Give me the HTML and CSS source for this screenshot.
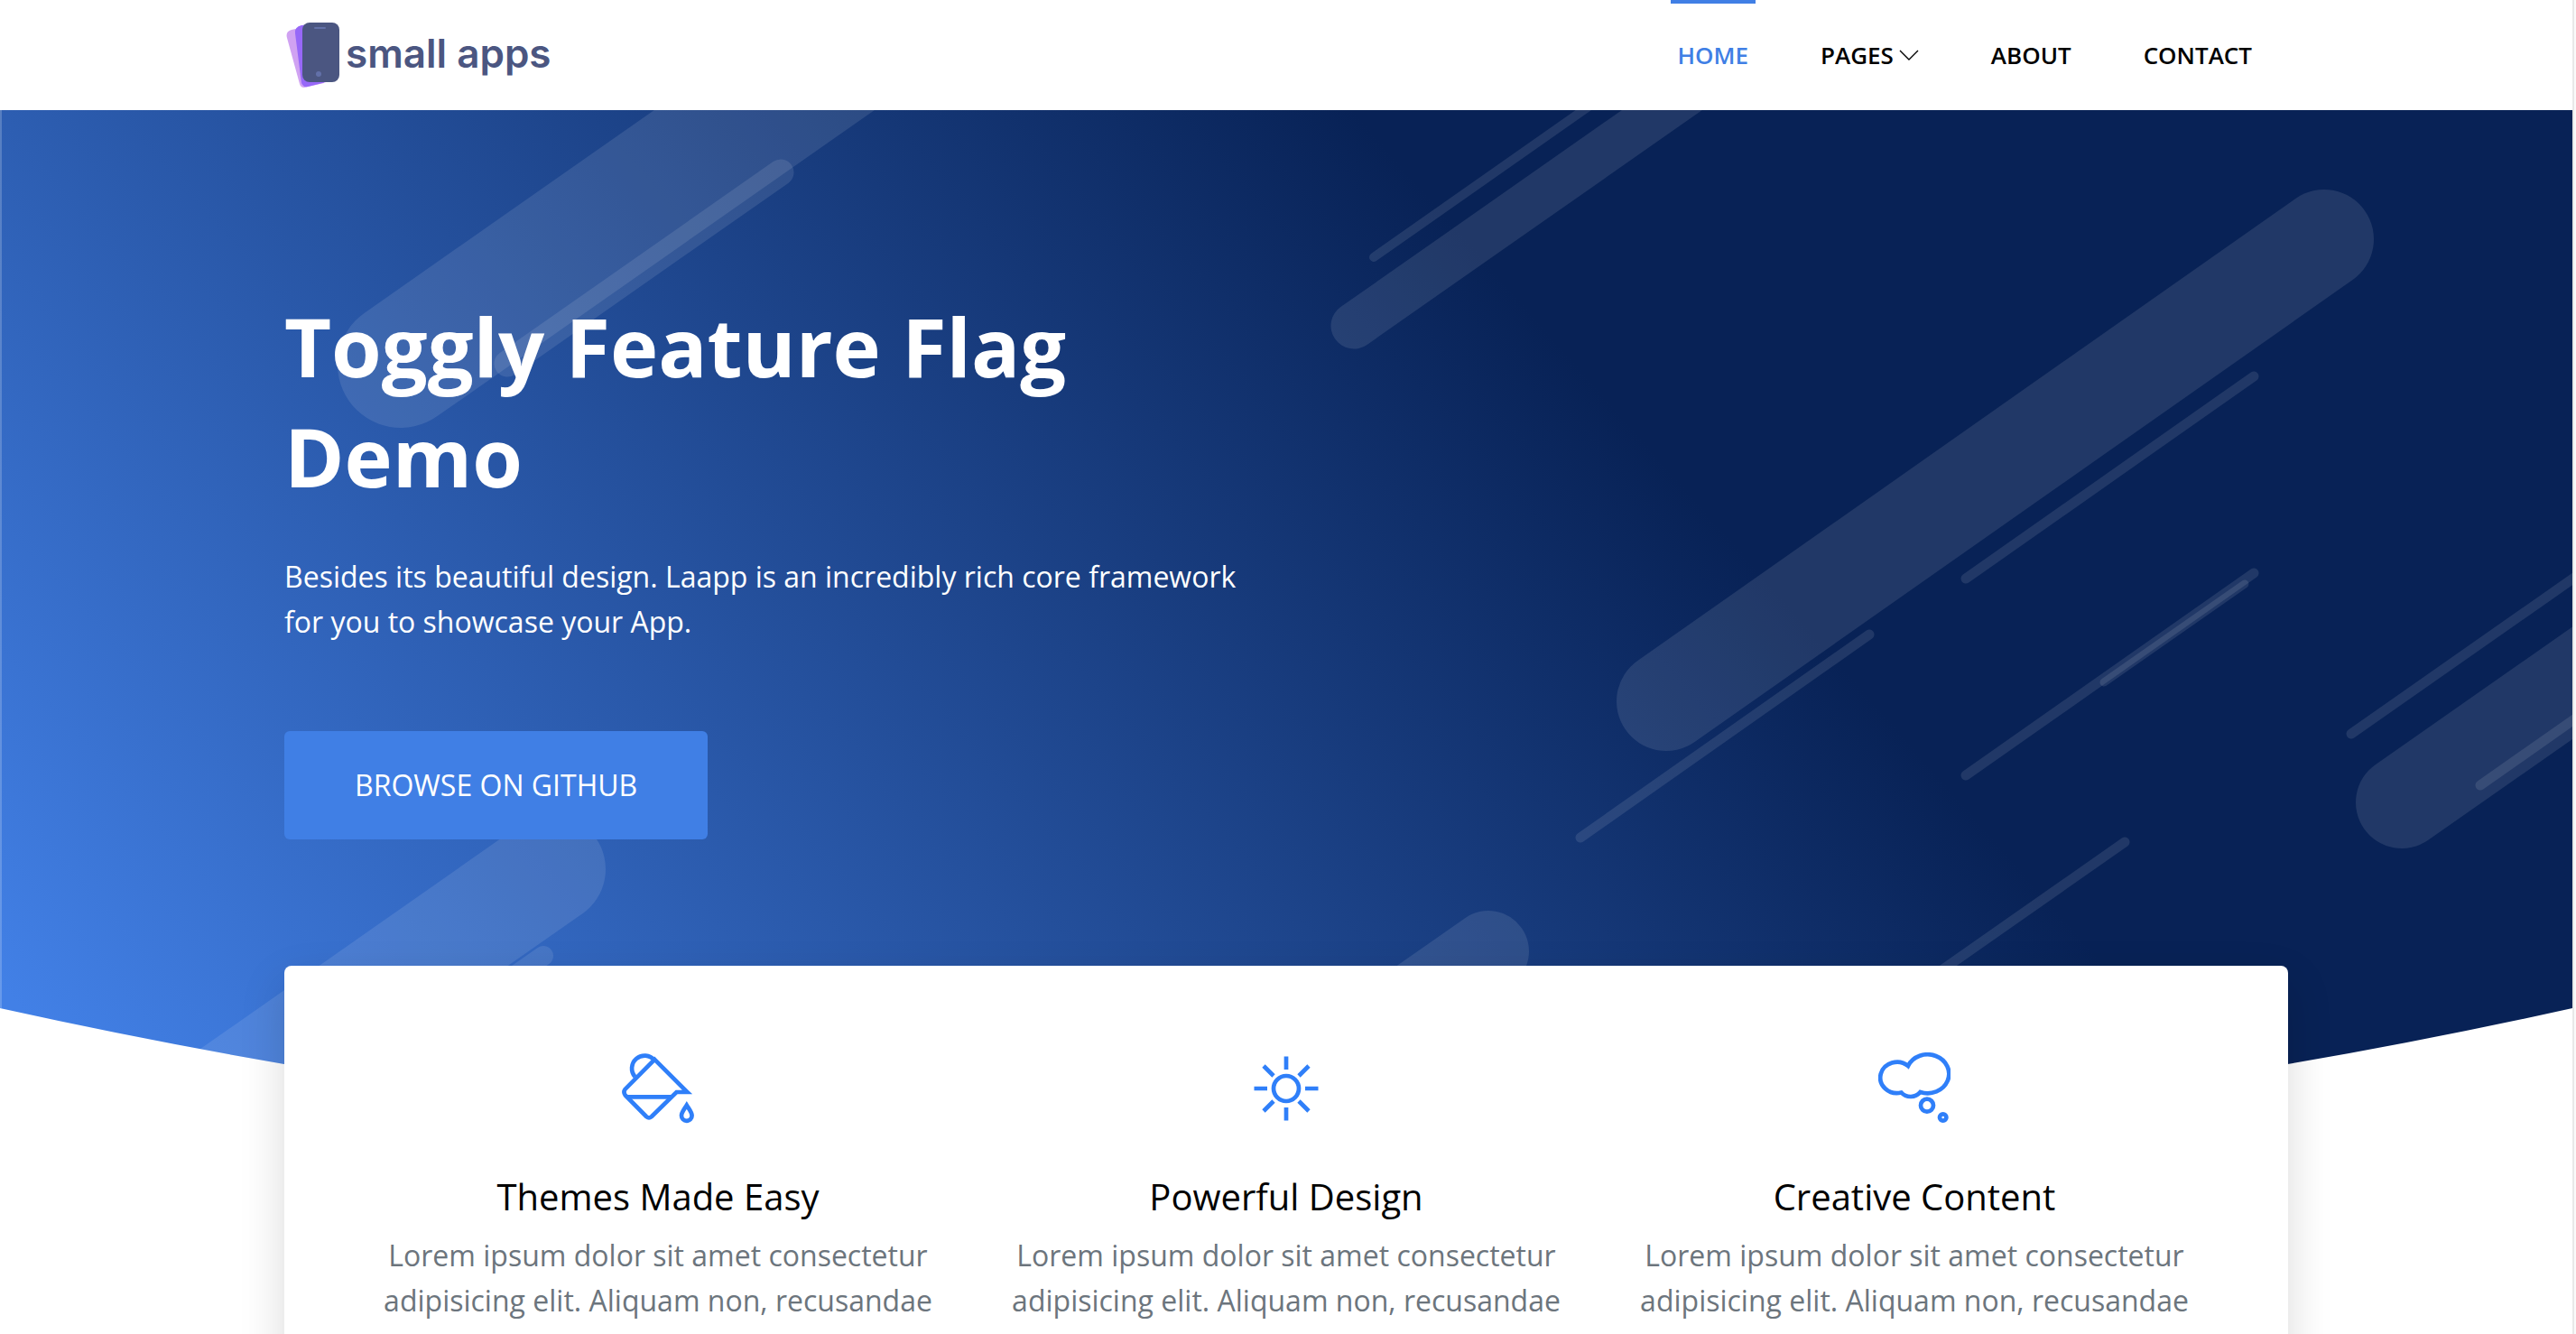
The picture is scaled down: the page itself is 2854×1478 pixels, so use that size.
FILE: index.html
```html
<!DOCTYPE html>
<html lang="en">
<head>
<meta charset="utf-8">
<meta name="viewport" content="width=device-width, initial-scale=1">
<title>Toggly Feature Flag Demo</title>
<link rel="stylesheet" href="styles.css">
</head>
<body>
<div class="page">
  <header class="header">
    <div class="container header-row">
      <a class="brand" href="#">
        <svg class="brand-mark" viewBox="0 0 60 74" aria-hidden="true">
          <path d="M1 18Q-1 11 6 9L24 5L42 68L20 73Q16 73 15 69Z" fill="#d0a2f2"/>
          <path d="M10 13Q9 6 17 4L30 3L48 66L24 72Q19 73 17 68Z" fill="#9768f8"/>
          <rect x="18" y="1" width="41" height="66" rx="8" fill="#4b5681"/>
          <rect x="31" y="6" width="13" height="2" rx="1" fill="#6270a8"/>
          <circle cx="36" cy="58" r="3" fill="#6270a8"/>
        </svg>
        <span class="brand-name">small apps</span>
      </a>
      <nav class="nav">
        <a class="nav-link active" href="#">HOME</a>
        <a class="nav-link" href="#">PAGES
          <svg class="chevron" viewBox="0 0 22 12" aria-hidden="true"><path d="M1 1l10 10L21 1"/></svg>
        </a>
        <a class="nav-link" href="#">ABOUT</a>
        <a class="nav-link" href="#">CONTACT</a>
      </nav>
    </div>
  </header>

  <main>
    <section class="hero">
      <svg class="hero-art" viewBox="0 0 2850 1154" preserveAspectRatio="none" aria-hidden="true">
        <defs>
          <linearGradient id="sky" gradientUnits="userSpaceOnUse" x1="0" y1="969" x2="1325" y2="-197">
            <stop offset="0" stop-color="#4280e6"/>
            <stop offset="1" stop-color="#082256"/>
          </linearGradient>
          <clipPath id="curve"><path d="M0 0H2850V995Q1425 1310 0 995Z"/></clipPath>
        </defs>
        <g clip-path="url(#curve)">
          <rect width="2850" height="1154" fill="url(#sky)"/>
          <g transform="translate(0 -122)" stroke="#fff" stroke-opacity="0.1" stroke-linecap="round" fill="none">
            <path stroke-width="140" d="M444 404L1044 -16"/>
            <path stroke-width="29" d="M562 403L865 191"/>
            <path stroke-width="120" d="M611 963L11 1383"/>
            <path stroke-width="22" d="M602 1059L402 1199"/>
            <path stroke-width="51" d="M1500 361L1960 39"/>
            <path stroke-width="10" d="M1522 285L1800 90"/>
            <path stroke-width="110" d="M1846 777L2575 265"/>
            <path stroke-width="11" d="M2178 641L2497 417"/>
            <path stroke-width="11" d="M2178 859L2497 635"/>
            <path stroke-width="9" d="M2331 756L2487 647"/>
            <path stroke-width="11" d="M1751 928L2071 703"/>
            <path stroke-width="11" d="M2354 933L2034 1157"/>
            <path stroke-width="11" d="M2605 813L2925 589"/>
            <path stroke-width="102" d="M2661 889L3061 609"/>
            <path stroke-width="11" d="M2748 870L3067 646"/>
            <path stroke-width="90" d="M1649 1054L1249 1334"/>
          </g>
          <rect width="2" height="1154" fill="#fff" fill-opacity="0.2"/>
        </g>
      </svg>
      <div class="container">
        <div class="hero-copy">
          <h1 class="hero-title">Toggly Feature Flag Demo</h1>
          <p class="hero-text">Besides its beautiful design. Laapp is an incredibly rich core framework for you to showcase your App.</p>
          <a class="button" href="#">BROWSE ON GITHUB</a>
        </div>
      </div>
    </section>

    <section class="features container">
      <div class="card">
        <article class="feature">
          <svg class="feature-icon" viewBox="0 0 80 80" aria-hidden="true">
            <path d="M36.3 7.8L72.5 44H60.500L32.800 71.200Q30 73.500 27.200 71.200L3.700 47.500Q1.200 44 3.700 40.700Z"/>
            <path d="M6 49.300H56"/>
            <path d="M14.500 27A14 14 0 1 1 36 8.500"/>
            <path d="M71.800 58.500C69 63 66 66.500 66 70a5.800 5.800 0 0 0 11.600 0C77.600 66.500 74.600 63 71.800 58.500Z"/>
          </svg>
          <h2 class="feature-title">Themes Made Easy</h2>
          <p class="feature-text">Lorem ipsum dolor sit amet consectetur adipisicing elit. Aliquam non, recusandae nemo quaerat ducimus quos id eum.</p>
        </article>
        <article class="feature">
          <svg class="feature-icon" viewBox="0 0 80 80" aria-hidden="true">
            <circle cx="40" cy="40" r="14"/>
            <path d="M40 4.500V19M40 61V75.500M4.500 40H19M61 40H75.500M15 15L26 26M54 54L65 65M65 15L54 26M26 54L15 65"/>
          </svg>
          <h2 class="feature-title">Powerful Design</h2>
          <p class="feature-text">Lorem ipsum dolor sit amet consectetur adipisicing elit. Aliquam non, recusandae nemo quaerat ducimus quos id eum.</p>
        </article>
        <article class="feature">
          <svg class="feature-icon" viewBox="0 0 80 80" aria-hidden="true">
            <path d="M33 15A23.700 21.500 0 1 1 46.500 44A14 14 0 0 1 25.500 44.500A18.500 17.200 0 1 1 33 15Z"/>
            <circle cx="54" cy="58.700" r="7"/>
            <circle cx="71.700" cy="72" r="3.700"/>
          </svg>
          <h2 class="feature-title">Creative Content</h2>
          <p class="feature-text">Lorem ipsum dolor sit amet consectetur adipisicing elit. Aliquam non, recusandae nemo quaerat ducimus quos id eum.</p>
        </article>
      </div>
    </section>
  </main>
</div>
</body>
</html>
```
FILE: styles.css
```css
* {
  box-sizing: border-box;
}

html {
  background: #fafafa;
}

body {
  margin: 0 2px 0 0;
  font-family: "Open Sans", "Noto Sans", sans-serif;
  font-size: 32px;
  line-height: 50px;
  color: #000;
}

h1, h2, p {
  margin: 0;
}

a {
  color: inherit;
  text-decoration: none;
}

.page {
  min-height: 100vh;
  overflow: hidden;
  background: #fff;
  border-right: 2px solid #e8e8e8;
}

.container {
  width: 100%;
  max-width: 2280px;
  margin: 0 auto;
  padding: 0 30px;
}

/* Header */

.header-row {
  display: flex;
  justify-content: space-between;
  height: 122px;
}

.brand {
  display: flex;
  align-items: center;
  gap: 6px;
  padding: 0 2px;
}

.brand-mark {
  width: 60px;
  height: 74px;
}

.brand-name {
  padding-bottom: 4px;
  font-family: Inter, sans-serif;
  font-size: 44px;
  font-weight: 600;
  color: #4b5681;
}

.nav {
  display: flex;
  gap: 64px;
  padding-right: 32px;
}

.nav-link {
  display: flex;
  align-items: center;
  gap: 6px;
  padding: 0 8px 4px;
  border-top: 4px solid transparent;
  font-size: 26px;
  font-weight: 600;
}

.nav-link.active {
  color: #407fe5;
  border-color: #407fe5;
}

.chevron {
  width: 22px;
  height: 12px;
  fill: none;
  stroke: #000;
  stroke-width: 1.4;
}

/* Hero */

.hero {
  position: relative;
  padding: 200px 0 346px;
  color: #fff;
}

.hero-art {
  position: absolute;
  inset: 0;
  width: 100%;
  height: 100%;
}

.hero-copy {
  position: relative;
  display: flex;
  flex-direction: column;
  align-items: flex-start;
  max-width: 1080px;
}

.hero-title {
  max-width: 1000px;
  margin-bottom: 48px;
  font-size: 90px;
  font-weight: 700;
  line-height: 122px;
}

.hero-text {
  margin-bottom: 96px;
}

.button {
  padding: 35px 78px;
  border-radius: 6px;
  background: #407fe5;
}

/* Feature card */

.features {
  position: relative;
  margin-top: -206px;
}

.card {
  display: grid;
  grid-template-columns: repeat(3, 1fr);
  padding: 96px 66px;
  border-radius: 8px;
  background: #fff;
  box-shadow: 0 20px 50px rgba(0, 0, 0, 0.15);
}

.feature {
  display: flex;
  flex-direction: column;
  align-items: center;
  padding: 0 30px;
  text-align: center;
}

.feature-icon {
  width: 80px;
  height: 80px;
  margin-bottom: 50px;
  fill: none;
  stroke: #2f7ff9;
  stroke-width: 4.7;
}

.feature-title {
  margin-bottom: 10px;
  font-size: 40px;
  font-weight: 400;
  line-height: 60px;
}

.feature-text {
  color: #6c757d;
}
```
